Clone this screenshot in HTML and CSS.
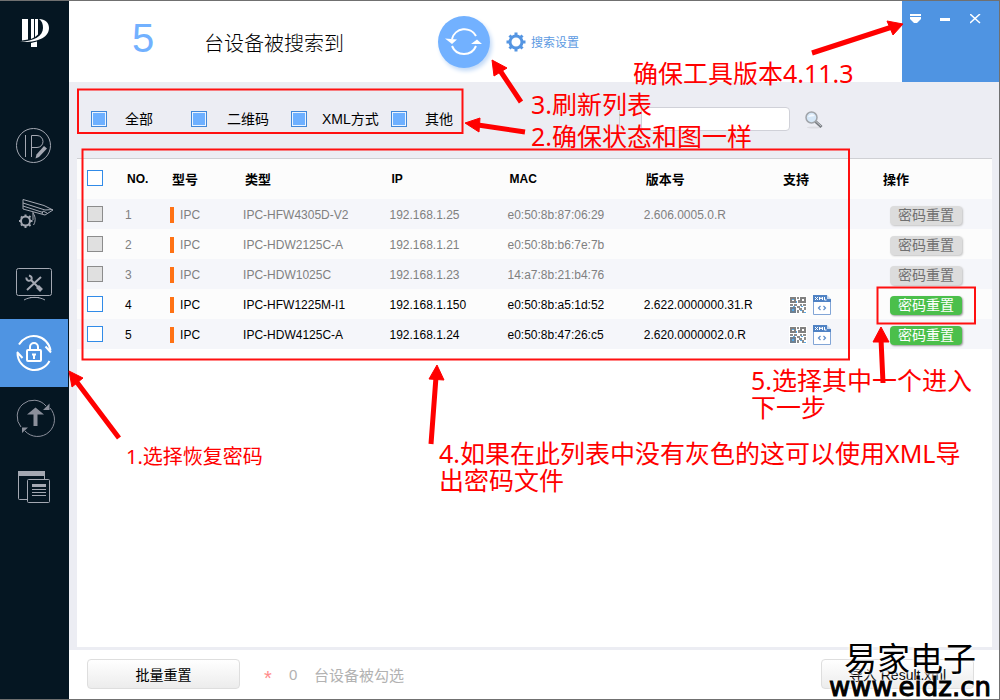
FILE: index.html
```html
<!DOCTYPE html>
<html lang="zh-CN">
<head>
<meta charset="utf-8">
<title>设备密码重置</title>
<link rel="stylesheet" href="styles.css">
</head>
<body>
<div class="window">
  <aside class="sidebar">
    <div class="logo">
      <svg width="32" height="32" viewBox="0 0 32 32" fill="#fff" aria-hidden="true">
        <path d="M3 2h6v20.500l-6 1zM12 2h3v18.500l-3 1.500zM16 2h3v15.500l-3 2.500z"/>
        <path d="M20 2c6 0 10 3.500 10 9 0 9-11 15-29 14 14-1 23-6 23-14 0-4-1-7-4-9z"/>
        <path d="M12 26l6-1.500V30h-6z"/>
      </svg>
    </div>
    <nav class="nav">
      <button class="nav-item" type="button" aria-label="修改IP">
        <svg width="68" height="68" viewBox="0 0 68 68"><circle cx="33.500" cy="30.500" r="17"/><path d="M25.500 20v22M31.500 42V20.500h5.500a6 6 0 0 1 0 12h-5.500"/><path class="solid" d="M44 31l3 2.500-8 8.500-3.500 1.500 1-4z"/></svg>
      </button>
      <button class="nav-item" type="button" aria-label="设备配置">
        <svg width="68" height="68" viewBox="0 0 68 68"><path d="M23 16.500l21 6 9 4.500-8 5-22-6zM23 20l22 7 7.500-.5M23 23l20 6.500M42 31l1-3 4 2M33 29v8M33 30c3 4 2.500 9 .5 12"/><circle class="thick" cx="25.500" cy="38" r="4.500"/><path class="teeth" d="M25.500 31.500v2M25.500 42.500v2.500M19 38h2M30 38h2.500M21 33.500l1 1M29 41.500l1.500 1.500M21 42.500l1-1M29 34.500l1.500-1.500"/></svg>
      </button>
      <button class="nav-item" type="button" aria-label="系统设置">
        <svg width="68" height="68" viewBox="0 0 68 68"><rect x="16.500" y="17.500" width="35" height="27" rx="2"/><path d="M24 49c6-3.500 15-3.500 21 0M30 46.500h9"/><path class="tool" d="M31 29l9 9M41 26L27 39"/><path class="tool" d="M26.500 26.500c-.5 3 3 4.500 5 2 .8-2-.5-3.500-2.500-4"/><path class="heavy" d="M37.500 35.500l4 4"/></svg>
      </button>
      <button class="nav-item active" type="button" aria-label="密码重置" aria-current="page">
        <svg width="68" height="68" viewBox="0 0 68 68"><path d="M19 25.500a17 17 0 0 1 31.500 6M49.500 42a17 17 0 0 1-32-8M45.500 27.500l5.500 6M22.500 39l-5.500-6"/><rect x="27" y="31" width="14" height="11" rx="1"/><path d="M30 31v-3a4 4 0 0 1 8 0v3"/><path d="M32 35.500h4M34 36v4"/></svg>
      </button>
      <button class="nav-item dim" type="button" aria-label="设备升级">
        <svg width="68" height="68" viewBox="0 0 68 68"><path d="M46 19a16 16 0 0 0-25 21M25 44a16 16 0 0 0 25-23"/><path class="solid" d="M49.500 16.500v6.500h-6.500zM22 40.500h6l-6 5.500zM35.500 20.500l8.500 7h-6.500v11.500h-4V27.500H27z"/></svg>
      </button>
      <button class="nav-item" type="button" aria-label="任务记录">
        <svg width="68" height="68" viewBox="0 0 68 68"><rect x="18.500" y="16.500" width="26" height="28" rx="1"/><path class="solid" d="M18 16h27v5H18z"/><rect class="cover" x="27.500" y="24.500" width="22" height="23" rx="1"/><path class="solid" d="M32 29h14v3H32z"/><path d="M32 34.500h14M32 37.500h14M32 40.500h14"/></svg>
      </button>
    </nav>
  </aside>

  <main class="main">
    <header class="header">
      <span class="count">5</span>
      <span class="found">台设备被搜索到</span>
      <button class="refresh" type="button" aria-label="刷新">
        <svg width="52" height="52" viewBox="0 0 52 52" fill="none" stroke="#fff" stroke-width="2" aria-hidden="true"><path d="M14 23a13 13 0 0 1 24-3M38 30a13 13 0 0 1-24 0"/><path fill="#fff" stroke="none" d="M7 22.500l12 1-5 4.500zM33 28l6-4.500 5 4.500z"/></svg>
      </button>
      <a class="settings" href="#settings">
        <svg width="20" height="20" viewBox="0 0 20 20" fill="none" stroke="#5495e2" aria-hidden="true"><circle cx="10" cy="10" r="6" stroke-width="3"/><path stroke-width="3" d="M10 .5v3M10 16.500v3M.5 10h3M16.500 10h3M3.500 3.500l2 2M14.500 14.500l2 2M3.500 16.500l2-2M14.500 5.500l2-2"/></svg>
        <span>搜索设置</span>
      </a>
      <div class="controls">
        <button type="button" aria-label="菜单"><svg width="12" height="10" viewBox="0 0 12 10" fill="#fff"><path d="M0 0h11v2H0zM0 3h11v2L7 9H4L0 5z"/></svg></button>
        <button type="button" aria-label="最小化"><svg width="12" height="10" viewBox="0 0 12 10" fill="#fff"><path d="M0 4h10v3H0z"/></svg></button>
        <button type="button" aria-label="关闭"><svg width="12" height="10" viewBox="0 0 12 10" fill="none" stroke="#fff" stroke-width="1.500"><path d="M0 0l10 9M10 0L0 9"/></svg></button>
      </div>
    </header>

    <div class="toolbar">
      <div class="filters">
        <label class="filter"><input type="checkbox" checked><span>全部</span></label>
        <label class="filter loose"><input type="checkbox" checked><span>二维码</span></label>
        <label class="filter tight"><input type="checkbox" checked><span>XML方式</span></label>
        <label class="filter"><input type="checkbox" checked><span>其他</span></label>
      </div>
      <form class="search">
        <span class="divider"></span>
        <input type="text" aria-label="搜索设备">
        <button type="button" aria-label="搜索">
          <svg width="20" height="20" viewBox="0 0 20 20" fill="none" aria-hidden="true"><ellipse cx="10" cy="17.500" rx="7" ry="1" fill="#dcdde2"/><path d="M11.500 11.500l6 5.500" stroke="#777b80" stroke-width="3"/><path d="M12 11.500l5 4.500" stroke="#c4c7ca"/><circle cx="7.500" cy="7.500" r="5.500" fill="#d5e7f7" stroke="#a0a4a9" stroke-width="1.500"/><path d="M4 7a4 4 0 0 1 7-1z" fill="#f5faff"/></svg>
        </button>
      </form>
    </div>

    <section class="panel">
      <table class="devices">
        <colgroup><col class="c-check"><col class="c-no"><col class="c-model"><col class="c-type"><col class="c-ip"><col class="c-mac"><col class="c-version"><col class="c-support"><col></colgroup>
        <thead>
          <tr><th><input type="checkbox" aria-label="全选"></th><th>NO.</th><th>型号</th><th>类型</th><th>IP</th><th>MAC</th><th>版本号</th><th>支持</th><th>操作</th></tr>
        </thead>
        <tbody>
          <tr class="off"><td><input type="checkbox" aria-label="设备1" disabled></td><td>1</td><td><span class="model">IPC</span></td><td>IPC-HFW4305D-V2</td><td>192.168.1.25</td><td>e0:50:8b:87:06:29</td><td>2.606.0005.0.R</td><td></td><td><button class="reset" type="button" disabled>密码重置</button></td></tr>
          <tr class="off"><td><input type="checkbox" aria-label="设备2" disabled></td><td>2</td><td><span class="model">IPC</span></td><td>IPC-HDW2125C-A</td><td>192.168.1.21</td><td>e0:50:8b:b6:7e:7b</td><td></td><td></td><td><button class="reset" type="button" disabled>密码重置</button></td></tr>
          <tr class="off"><td><input type="checkbox" aria-label="设备3" disabled></td><td>3</td><td><span class="model">IPC</span></td><td>IPC-HDW1025C</td><td>192.168.1.23</td><td>14:a7:8b:21:b4:76</td><td></td><td></td><td><button class="reset" type="button" disabled>密码重置</button></td></tr>
          <tr><td><input type="checkbox" aria-label="设备4"></td><td>4</td><td><span class="model">IPC</span></td><td>IPC-HFW1225M-I1</td><td>192.168.1.150</td><td>e0:50:8b:a5:1d:52</td><td>2.622.0000000.31.R</td><td><span class="support"><svg width="18" height="18"><use href="#qr"/></svg><svg width="18" height="20"><use href="#xml"/></svg></span></td><td><button class="reset" type="button">密码重置</button></td></tr>
          <tr><td><input type="checkbox" aria-label="设备5"></td><td>5</td><td><span class="model">IPC</span></td><td>IPC-HDW4125C-A</td><td>192.168.1.24</td><td>e0:50:8b:47:26:c5</td><td>2.620.0000002.0.R</td><td><span class="support"><svg width="18" height="18"><use href="#qr"/></svg><svg width="18" height="20"><use href="#xml"/></svg></span></td><td><button class="reset" type="button">密码重置</button></td></tr>
        </tbody>
      </table>
    </section>

    <footer class="footer">
      <button class="action" type="button">批量重置</button>
      <span class="star">*</span>
      <span class="picked">0</span>
      <span class="picked-label">台设备被勾选</span>
      <button class="action import" type="button">导入 Result.xml</button>
    </footer>
  </main>

  <svg class="marks" width="1000" height="700" viewBox="0 0 1000 700" aria-hidden="true">
    <g class="frames"><path d="M78 89.500h384.500v43.500H78zM82.500 149.500H849v210H82.500zM877.500 287.500h97.500v36h-97.500z"/></g>
    <g class="shafts"><path d="M119 438L76 381M521 102l-22-33M525 132l-47-7M812 53l80-26M883 383l-2-44M431 444l5-67"/></g>
    <g class="heads"><path d="M69 371l14 7-11 9zM492 60l15 8-13 8zM465 123l15-5-1 14zM903 24l-16-3 6 14zM881 327l-8 15h16zM437 365l-8 14 15 1z"/></g>
  </svg>
  <p class="note note-version">确保工具版本4.11.3</p>
  <p class="note note-refresh">3.刷新列表</p>
  <p class="note note-state">2.确保状态和图一样</p>
  <p class="note note-restore">1.选择恢复密码</p>
  <p class="note note-export">4.如果在此列表中没有灰色的这可以使用XML导<br>出密码文件</p>
  <p class="note note-next">5.选择其中一个进入<br>下一步</p>
  <div class="brand"><span class="brand-name">易家电子</span><span class="brand-url">www.eidz.cn</span></div>
</div>

<svg class="symbols" width="0" height="0" aria-hidden="true">
  <symbol id="qr" viewBox="0 0 18 18">
    <path fill="#fff" d="M0 0h18v18H0z"/>
    <path fill="none" stroke="#808080" stroke-width="2" d="M2 2h4v4H2zM12 2h4v4h-4z"/>
    <path fill="none" stroke="#6f8090" stroke-width="2" d="M2 12h4v4H2z"/>
    <path fill="#8c8c8c" d="M8 1h2v2H8zM9 4h2v3H9zM1 8h3v2H1zM5 8h3v2H5zM8 10h3v2H8zM11 8h2v2h-2zM14 8h3v2h-3zM8 14h2v3H8zM10 12h3v2h-3zM13 14h2v3h-2zM15 11h2v3h-2z"/>
    <path fill="#58a9e8" d="M3 3h2v1H3zM7 5h1v2H7zM4 10h2v1H4zM3 13h2v2H3zM11 14h2v1h-2zM12 10h2v1h-2zM15 16h2v1h-2z"/>
  </symbol>
  <symbol id="xml" viewBox="0 0 18 20">
    <path fill="#fff" stroke="#82a5d6" d="M.5 .5h13l4 4v15H.5z"/>
    <path fill="#4f82c4" d="M0 0h14v4h4v3H0z"/>
    <path fill="#c9daef" d="M14 0l4 4h-4z"/>
    <path fill="none" stroke="#fff" d="M2 2l3 3M5 2L2 5M6.500 5V2l1.500 2 1.500-2v3M11.500 2v3h2"/>
    <path fill="none" stroke="#5b8cca" stroke-width="1.200" d="M7.500 11L5.500 13l2 2M10.500 11l2 2-2 2"/>
  </symbol>
</svg>
</body>
</html>
```
FILE: styles.css
```css
* { box-sizing: border-box; }

body {
  margin: 0;
  font: 12px "Liberation Sans", "Noto Sans CJK SC", sans-serif;
  color: #000;
}

button, input { font: inherit; margin: 0; }
button { padding: 0; border: 0; background: none; color: inherit; }

.window {
  position: relative;
  display: flex;
  min-height: 100vh;
  border: solid #707070;
  border-width: 1px 1px 1px 0;
  overflow: hidden;
}

/* Sidebar */
.sidebar {
  flex: none;
  width: 69px;
  background: #051622;
}
.logo { height: 114px; padding: 16px 0 0 19px; }
.nav { display: flex; flex-direction: column; }
.nav-item { width: 68px; height: 68px; }
.nav-item svg {
  display: block;
  fill: none;
  stroke: #a4a8b2;
  stroke-width: 1;
}
.nav-item .solid { fill: #a4a8b2; stroke: none; }
.nav-item .thick { stroke-width: 2; }
.nav-item .teeth { stroke-width: 2; }
.nav-item .tool { stroke-width: 2; }
.nav-item .heavy { stroke-width: 4; }
.nav-item .cover { fill: #051622; }
.nav-item.dim svg { stroke: #8b8f9b; }
.nav-item.dim .solid { fill: #8b8f9b; }
.nav-item.active { background: #4f94e2; }
.nav-item.active svg { stroke: #fff; stroke-width: 2; }

.main {
  flex: 1;
  display: flex;
  flex-direction: column;
  min-width: 0;
  background: #ecedf3;
}

/* Header */
.header {
  display: flex;
  align-items: center;
  height: 81px;
  padding-left: 63px;
  background: #fff;
}
.count { width: 72px; font-size: 40px; line-height: 40px; color: #72b1ff; padding-bottom: 8px; }
.found { width: 234px; font-size: 20px; font-weight: 300; white-space: nowrap; padding-top: 2px; }
.refresh {
  width: 52px;
  height: 52px;
  border-radius: 50%;
  background: #72b1ff;
  box-shadow: 2px 3px 4px #c3daf7;
}
.refresh svg { display: block; }
.settings {
  display: flex;
  align-items: center;
  gap: 5px;
  margin-left: 16px;
  color: #5c9ae2;
  text-decoration: none;
}
.controls {
  display: flex;
  align-self: stretch;
  align-items: flex-start;
  gap: 18px;
  width: 97px;
  margin-left: auto;
  padding: 13px 0 0 8px;
  background: #4f94e2;
}
.controls svg { display: block; }

/* Toolbar */
.toolbar {
  display: flex;
  align-items: center;
  height: 76px;
  padding: 0 0 2px 22px;
}
.filters { display: grid; grid-template-columns: repeat(4, 100px); }
.filter { display: flex; align-items: center; gap: 18px; font-size: 14px; line-height: 20px; white-space: nowrap; }
.filter.loose { gap: 20px; }
.filter.tight { gap: 15px; }

input[type="checkbox"] {
  appearance: none;
  flex: none;
  display: block;
  width: 16px;
  height: 16px;
  border: 1px solid #318be8;
  background: #fff;
}
.filter input[type="checkbox"]:checked {
  background: #6eb0ff;
  border-color: #4187d8;
  box-shadow: inset 0 0 0 1px #eaf4ff;
}
input[type="checkbox"]:disabled { background: #e0e0e0; border-color: #8c8c8c; }

.search { display: flex; align-items: center; margin-left: 128px; }
.divider { width: 22px; height: 16px; border-left: 1px solid #cfd0d6; }
.search input {
  width: 149px;
  height: 24px;
  padding: 0 6px;
  border: 1px solid #d0d1d8;
  border-radius: 4px;
  background: #fff;
}
.search button { margin-left: 14px; padding-top: 2px; }
.search svg { display: block; }

/* Device list */
.panel {
  flex: 1;
  margin: 0 7px 3px 8px;
  border-top: 1px solid #cfd0d4;
  background: #fff;
}
.devices { width: 100%; table-layout: fixed; border-collapse: collapse; }
.c-check { width: 5.25%; }
.c-no { width: 4.92%; }
.c-model { width: 7.98%; }
.c-type { width: 16%; }
.c-ip { width: 12.9%; }
.c-mac { width: 14.9%; }
.c-version { width: 15%; }
.c-support { width: 10.93%; }
.devices th, .devices td { text-align: left; white-space: nowrap; }
.devices th { height: 40px; padding: 0 2px 2px; font-size: 13px; }
.devices th:nth-child(2), .devices th:nth-child(5), .devices th:nth-child(6) { padding-bottom: 0; font-size: 12px; }
.devices td { height: 30px; padding: 1px 0 0; }
.devices th:first-child, .devices td:first-child { padding-left: 10px; }
.devices td:first-child { padding-top: 0; }
.devices td:nth-child(8), .devices td:nth-child(9) { padding-left: 8px; }
.devices td:nth-child(9) { padding: 3px 0 0 9px; }
.devices thead tr, .devices tbody tr:nth-child(even) { background: #fcfcfc; }
.devices tbody tr:nth-child(odd) { background: #f5f6fa; }
.off { color: #808080; }
.model { display: flex; align-items: center; gap: 6px; }
.model::before { content: ""; width: 4px; height: 16px; background: #ff7214; }
.support { display: flex; align-items: center; gap: 6px; }
.reset {
  display: block;
  width: 72px;
  height: 19px;
  border-radius: 4px;
  background: #4bbf4b;
  box-shadow: 1px 1px 2px #9b9b9b;
  color: #fff;
  font-size: 14px;
  line-height: 19px;
}
.reset:disabled { background: #dcdcdc; box-shadow: 1px 1px 2px #c4c4c4; color: #707070; }

/* Footer */
.footer {
  display: flex;
  align-items: center;
  height: 49px;
  padding: 0 25px 2px 18px;
  background: #fff;
  color: #b2b2b2;
  font-size: 15px;
}
.action {
  width: 153px;
  height: 30px;
  border: 1px solid #dedede;
  border-radius: 4px;
  background: linear-gradient(#fff, #ececec);
  color: #000;
  font-size: 14px;
}
.star { width: 25px; margin-left: 24px; font-size: 20px; line-height: 20px; padding-top: 8px; color: #ff8c8c; }
.picked { width: 25px; padding-top: 2px; }
.picked-label { padding-top: 2px; }
.import { margin-left: auto; }

/* Guide overlay */
.marks { position: absolute; left: 0; top: -1px; pointer-events: none; }
.frames { fill: none; stroke: #ff1010; stroke-width: 2; }
.shafts { fill: none; stroke: #f00; stroke-width: 5; }
.heads { fill: #f00; stroke: #f00; }
.note {
  position: absolute;
  margin: 0;
  color: #f00;
  font: 25px/27px "Noto Sans", "Noto Sans CJK SC", sans-serif;
  white-space: nowrap;
  pointer-events: none;
}
.note-version { left: 633px; top: 59px; }
.note-refresh { left: 531px; top: 90px; }
.note-state { left: 531px; top: 122px; }
.note-restore { left: 126px; top: 442px; font-size: 20px; }
.note-export { left: 439px; top: 439px; }
.note-next { left: 751px; top: 366px; }
.brand {
  position: absolute;
  right: 8px;
  bottom: -1px;
  display: flex;
  flex-direction: column;
  align-items: center;
  color: #000;
  text-shadow: 0 0 2px #fff, 0 0 3px #fff, 0 0 4px #fff;
  pointer-events: none;
}
.brand-name { font: 33px/34px "Noto Sans CJK SC", sans-serif; }
.brand-url { font: 26px/26px "DejaVu Sans", sans-serif; -webkit-text-stroke: 1px #000; }
.symbols { position: absolute; }
```
